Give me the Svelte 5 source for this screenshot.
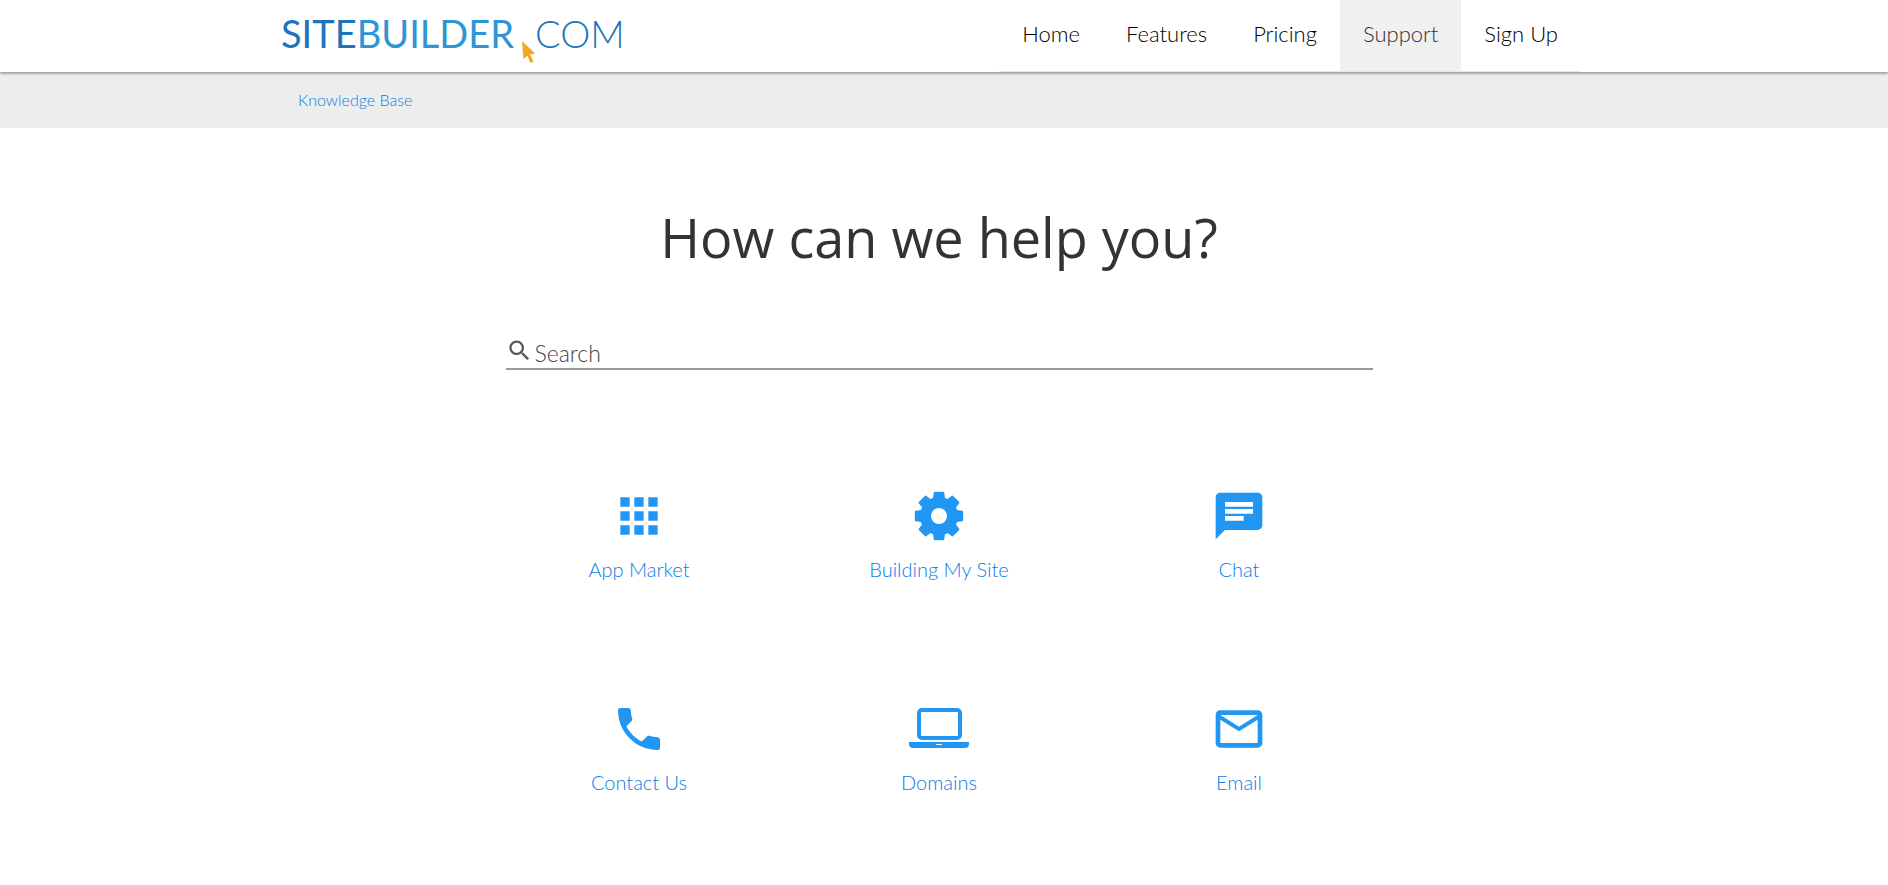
<script>
  const menu = [
    { name: "Home", href: "#home" },
    { name: "Features", href: "#features" },
    { name: "Pricing", href: "#pricing" },
    { name: "Support", href: "#support" },
    { name: "Sign Up", href: "#signup" },
  ];

  const topics = [
    { name: "App Market", icon: "apps" },
    { name: "Building My Site", icon: "gear" },
    { name: "Chat", icon: "chat" },
    { name: "Contact Us", icon: "phone" },
    { name: "Domains", icon: "laptop" },
    { name: "Email", icon: "mail" },
  ];

  // single-path icons on a 24x24 grid
  const paths = {
    apps: "M4 8h4V4H4v4zm6 12h4v-4h-4v4zm-6 0h4v-4H4v4zm0-6h4v-4H4v4zm6 0h4v-4h-4v4zm6-10v4h4V4h-4zm-6 4h4V4h-4v4zm6 6h4v-4h-4v4zm0 6h4v-4h-4v4z",
    chat: "M20 2H4c-1.1 0-1.99.9-1.99 2L2 22l4-4h14c1.1 0 2-.9 2-2V4c0-1.1-.9-2-2-2zM6 9h12v2H6V9zm8 5H6v-2h8v2zm4-6H6V6h12v2z",
    phone:
      "M6.62 10.79c1.44 2.83 3.76 5.14 6.59 6.59l2.2-2.2c.27-.27.67-.36 1.02-.24 1.12.37 2.33.57 3.57.57.55 0 1 .45 1 1V20c0 .55-.45 1-1 1-9.39 0-17-7.61-17-17 0-.55.45-1 1-1h3.5c.55 0 1 .45 1 1 0 1.25.2 2.45.57 3.57.11.35.03.74-.25 1.02l-2.2 2.2z",
    mail: "M20 4H4c-1.1 0-1.99.9-1.99 2L2 18c0 1.1.9 2 2 2h16c1.1 0 2-.9 2-2V6c0-1.1-.9-2-2-2zm0 14H4V8l8 5 8-5v10zm-8-7L4 6h16l-8 5z",
  };

  let active = $state("Support");
  let query = $state("");
</script>

<header>
  <div class="header-inner">
    <a class="logo" href="#home" aria-label="Sitebuilder.com">
      <span class="site">SITE</span><span class="builder">BUILDER</span>
      <svg class="cursor" viewBox="0 0 13 22" aria-hidden="true">
        <path d="M0 0L13 12.5L8 13.5L11.5 20.5L8.5 22L5.5 14.8L1.5 18Z" />
      </svg>
      <span class="com">COM</span>
    </a>
    <nav>
      {#each menu as item (item.name)}
        <a
          href={item.href}
          class:active={item.name === active}
          onclick={() => (active = item.name)}>{item.name}</a
        >
      {/each}
    </nav>
  </div>
</header>

<div class="breadcrumb">
  <div class="breadcrumb-inner">
    <a href="#kb">Knowledge Base</a>
  </div>
</div>

<main>
  <h1>How can we help you?</h1>

  <label class="search">
    <svg viewBox="0 0 24 24" aria-hidden="true">
      <path
        d="M15.5 14h-.79l-.28-.27C15.41 12.59 16 11.11 16 9.5 16 5.91 13.09 3 9.5 3S3 5.91 3 9.5 5.91 16 9.5 16c1.61 0 3.09-.59 4.23-1.57l.27.28v.79l5 4.99L20.49 19l-4.99-5zm-6 0C7.01 14 5 11.99 5 9.5S7.01 5 9.5 5 14 7.01 14 9.5 11.99 14 9.5 14z"
      />
    </svg>
    <input
      type="text"
      bind:value={query}
      placeholder="Search"
      aria-label="Search"
    />
  </label>

  <div class="topics">
    {#each topics as topic (topic.icon)}
      <a class="topic" href={"#" + topic.icon}>
        {#if topic.icon === "gear"}
          <svg viewBox="-28 -28 56 56" aria-hidden="true">
            <circle r="13.500" fill="none" stroke="currentColor" stroke-width="11" />
            {#each [0, 45, 90, 135, 180, 225, 270, 315] as angle}
              <path
                d="M-7.6 -15.5L-6 -18L-5.2 -23.4Q-5 -24.2 -4.2 -24.2H4.2Q5 -24.2 5.2 -23.4L6 -18L7.6 -15.5Z"
                transform="rotate({angle})"
              />
            {/each}
          </svg>
        {:else if topic.icon === "laptop"}
          <svg class="wide" viewBox="0 0 62 56" aria-hidden="true">
            <rect
              x="11"
              y="9"
              width="41"
              height="28"
              rx="3"
              fill="none"
              stroke="currentColor"
              stroke-width="4"
            />
            <path
              d="M1 41H61V43Q61 47 57 47H5Q1 47 1 43ZM28.500 43Q28 43 28 43.500Q28 44 28.500 44H33.500Q34 44 34 43.500Q34 43 33.500 43Z"
              fill-rule="evenodd"
            />
          </svg>
        {:else}
          <svg viewBox="0 0 24 24" aria-hidden="true">
            <path d={paths[topic.icon]} />
          </svg>
        {/if}
        <span>{topic.name}</span>
      </a>
    {/each}
  </div>
</main>

<style>
  :global(body) {
    margin: 0;
    background: #fff;
    font-family: Lato, "Liberation Sans", sans-serif;
    font-weight: 300;
    color: #333;
  }

  a {
    color: #0a7cea;
    text-decoration: none;
  }

  svg {
    display: block;
    fill: currentColor;
  }

  header {
    position: relative;
    z-index: 1;
    padding-right: 26px;
    background: #fff;
    box-shadow: 0 2px 2px rgba(0, 0, 0, 0.3);
  }

  .header-inner {
    display: flex;
    justify-content: space-between;
    max-width: 1300px;
    height: 72px;
    margin: 0 auto;
  }

  .logo {
    display: flex;
    align-items: flex-start;
    font-size: 38px;
    font-weight: 400;
    line-height: 66px;
    color: #1c75bc;
  }

  .builder {
    color: #2d95d3;
  }

  .com {
    font-weight: 300;
  }

  .cursor {
    width: 13px;
    height: 22px;
    margin: 41px 0 0 8px;
    color: #f5a623;
  }

  nav {
    display: flex;
    border-bottom: 1px solid #e7e7e7;
  }

  nav a {
    padding: 0 23px;
    font-size: 22px;
    line-height: 68px;
    color: #000;
  }

  nav a.active {
    background: #f0f0f0;
    color: #333;
  }

  .breadcrumb {
    padding-right: 26px;
    background: #ededed;
  }

  .breadcrumb-inner {
    max-width: 1266px;
    margin: 0 auto;
    font-size: 16px;
    line-height: 56px;
  }

  main {
    display: flex;
    flex-direction: column;
    align-items: center;
    padding: 64px 10px 64px 0;
  }

  h1 {
    margin: 0;
    font-family: "Open Sans", sans-serif;
    font-size: 54px;
    font-weight: 400;
    line-height: 90px;
  }

  .search {
    display: flex;
    align-items: center;
    width: 100%;
    max-width: 867px;
    height: 36px;
    margin-top: 50px;
    border-bottom: 2px solid #999;
  }

  .search svg {
    width: 27px;
    height: 27px;
    color: #555;
  }

  .search input {
    flex: 1;
    padding: 5px 2px 0;
    border: 0;
    outline: 0;
    background: none;
    font: inherit;
    font-size: 23px;
  }

  .search input::placeholder {
    color: #444;
  }

  .topics {
    display: grid;
    grid-template-columns: repeat(3, 1fr);
    width: 100%;
    max-width: 900px;
    margin-top: 118px;
    row-gap: 117px;
  }

  .topic {
    display: flex;
    flex-direction: column;
    align-items: center;
    gap: 10px;
    font-size: 20px;
    line-height: 30px;
  }

  .topic svg {
    width: 56px;
    height: 56px;
    color: #2196f3;
  }

  .topic svg.wide {
    width: 62px;
  }
</style>
